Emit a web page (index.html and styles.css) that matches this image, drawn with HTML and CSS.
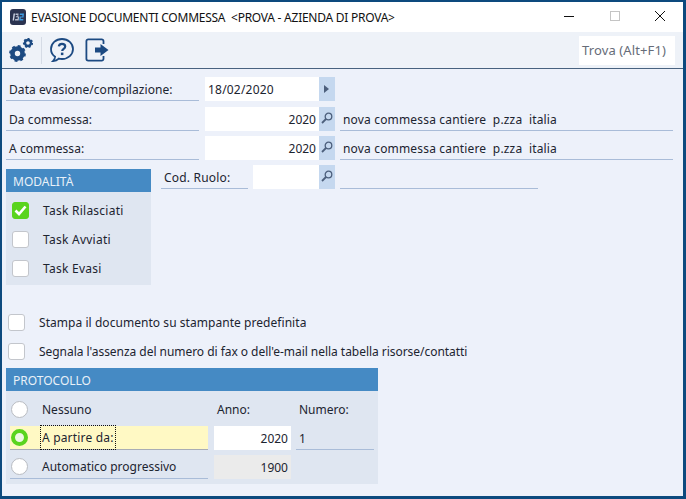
FILE: index.html
```html
<!DOCTYPE html>
<html lang="it">
<head>
<meta charset="utf-8">
<title>Evasione documenti commessa</title>
<link rel="stylesheet" href="styles.css">
</head>
<body>
<div class="window">
  <header class="titlebar">
    <svg class="logo" width="16" height="16" viewBox="0 0 16 16"><rect width="16" height="16" rx="3" fill="#2b3350"/><path d="M3.600 4.500h1.400l-1 7H2.600z" fill="#cfd6e6"/><path d="M5.600 4.500h3l-.4 3 .9 0-.4 4H5l.2-1.400h2.400l.2-1.800H5.800l.1-1h1.400l.2-1.400H5.500z" fill="#cfd6e6" opacity=".85"/><path d="M10 4.500h4l-.5 4h-2.700l-.1 1.600h2.700l-.2 1.400h-4l.4-4h2.700l.1-1.600h-2.700z" fill="#3d9ae0"/></svg>
    <span class="title">EVASIONE DOCUMENTI COMMESSA&nbsp; &lt;PROVA - AZIENDA DI PROVA&gt;</span>
    <div class="winctl">
      <svg width="12" height="12" viewBox="0 0 12 12"><path d="M1 6.500h10" stroke="#111" stroke-width="1"/></svg>
      <svg class="ctl-max" width="12" height="12" viewBox="0 0 12 12"><rect x=".5" y="1.500" width="9" height="9" fill="none" stroke="#c4c4c4"/></svg>
      <svg width="12" height="12" viewBox="0 0 12 12"><path d="M1 1l10 10M11 1L1 11" stroke="#111" stroke-width="1"/></svg>
    </div>
  </header>
  <nav class="toolbar">
    <svg class="tool" width="24" height="24" viewBox="0 0 24 24" fill="none" stroke="#1c4a82">
      <circle cx="8.500" cy="15.500" r="5" stroke-width="4.600"/>
      <circle cx="8.500" cy="15.500" r="7.400" stroke-width="2" stroke-dasharray="2.900 2.910"/>
      <circle cx="19" cy="5" r="3" stroke-width="2.400"/>
      <circle cx="19" cy="5" r="4.300" stroke-width="1.600" stroke-dasharray="1.930 1.930"/>
    </svg>
    <span class="sep"></span>
    <svg class="tool" width="24" height="24" viewBox="0 0 24 24" fill="none">
      <path d="M12 1C18.100 1 23 5.400 23 11S18.100 21 12 21c-1.100 0-2.200-.1-3.200-.4-1.500 1.500-3.400 2.300-5.800 2.500 1.200-1.200 2-2.600 2.100-4.300C2.600 17.100 1 14.300 1 11 1 5.400 5.900 1 12 1z" stroke="#1c4a82" stroke-width="1.800"/>
      <path d="M8.800 8.400c.3-1.600 1.500-2.500 3.200-2.500 1.900 0 3.200 1.100 3.200 2.600 0 2.300-3 2.400-3 4.500" stroke="#1c4a82" stroke-width="2.200"/>
      <rect x="10.900" y="14.600" width="2.500" height="2.500" fill="#1c4a82"/>
    </svg>
    <svg class="tool door" width="24" height="24" viewBox="0 0 24 24" fill="none">
      <path d="M18.500 6V3.200a1.800 1.800 0 0 0-1.800-1.800H3.200a1.800 1.800 0 0 0-1.800 1.800v17.600a1.800 1.800 0 0 0 1.800 1.800h13.500a1.800 1.800 0 0 0 1.800-1.800V18" stroke="#1c4a82" stroke-width="1.800"/>
      <path d="M10 9.500h5.500V6l8 6-8 6v-3.500H10z" fill="#1c4a82"/>
    </svg>
    <span class="search">Trova (Alt+F1)</span>
  </nav>
  <main class="form">
    <div class="row first">
      <span class="label">Data evasione/compilazione:</span>
      <span class="input date">18/02/2020</span>
      <span class="btn"><svg width="6" height="10" viewBox="0 0 6 10"><path d="M0 1l5 4-5 4z" fill="#4c5f7c"/></svg></span>
    </div>
    <div class="row">
      <span class="label">Da commessa:</span>
      <span class="input num">2020</span>
      <span class="btn"><svg class="lens" width="12" height="12" viewBox="0 0 12 12" fill="none"><circle cx="7.500" cy="4.500" r="3.300" stroke="#4c5f7c" stroke-width="1.300"/><path d="M5 7L1 11" stroke="#4c5f7c" stroke-width="1.800"/></svg></span>
      <span class="desc">nova commessa cantiere&nbsp; p.zza&nbsp; italia</span>
    </div>
    <div class="row">
      <span class="label">A commessa:</span>
      <span class="input num">2020</span>
      <span class="btn"><svg class="lens" width="12" height="12" viewBox="0 0 12 12" fill="none"><circle cx="7.500" cy="4.500" r="3.300" stroke="#4c5f7c" stroke-width="1.300"/><path d="M5 7L1 11" stroke="#4c5f7c" stroke-width="1.800"/></svg></span>
      <span class="desc">nova commessa cantiere&nbsp; p.zza&nbsp; italia</span>
    </div>
    <div class="middle">
      <section class="group modalita">
        <h2 class="group-head">MODALITÀ</h2>
        <div class="checks">
          <div class="check-row"><span class="box on"><svg width="13" height="11" viewBox="0 0 13 11" fill="none"><path d="M1.500 5.500l3.500 3.500 6.500-7.500" stroke="#fff" stroke-width="2.600"/></svg></span><span>Task Rilasciati</span></div>
          <div class="check-row"><span class="box"></span><span>Task Avviati</span></div>
          <div class="check-row"><span class="box"></span><span>Task Evasi</span></div>
        </div>
      </section>
      <div class="row ruolo">
        <span class="label short">Cod. Ruolo:</span>
        <span class="input small"></span>
        <span class="btn"><svg class="lens" width="12" height="12" viewBox="0 0 12 12" fill="none"><circle cx="7.500" cy="4.500" r="3.300" stroke="#4c5f7c" stroke-width="1.300"/><path d="M5 7L1 11" stroke="#4c5f7c" stroke-width="1.800"/></svg></span>
        <span class="desc narrow"></span>
      </div>
    </div>
    <div class="options">
      <div class="opt-row"><span class="box"></span><span class="print">Stampa il documento su stampante predefinita</span></div>
      <div class="opt-row"><span class="box"></span><span class="warn">Segnala l'assenza del numero di fax o dell'e-mail nella tabella risorse/contatti</span></div>
    </div>
    <section class="group protocollo">
      <h2 class="group-head">PROTOCOLLO</h2>
      <div class="proto-grid">
        <div class="radio-cell"><span class="radio"></span><span class="radio-text">Nessuno</span></div>
        <div class="head-cell">Anno:</div>
        <div class="head-cell">Numero:</div>
        <div class="radio-cell active"><span class="radio on"></span><span class="radio-text focus">A partire da:</span></div>
        <span class="input num">2020</span>
        <div class="numero">1</div>
        <div class="radio-cell ruled"><span class="radio"></span><span class="radio-text">Automatico progressivo</span></div>
        <span class="input num disabled">1900</span>
        <div></div>
      </div>
    </section>
  </main>
</div>
</body>
</html>
```
FILE: styles.css
```css
* { box-sizing: border-box; }
html, body { margin: 0; padding: 0; }
body {
  width: 686px;
  height: 499px;
  overflow: hidden;
  font-family: "Noto Sans", sans-serif;
  font-size: 12px;
  color: #1c2430;
}
.window {
  width: 686px;
  height: 499px;
  border: solid #0d4a7e;
  border-width: 2px 3px 3px 2px;
  background: #edf1fa;
}
.titlebar {
  height: 30px;
  background: #fff;
  display: flex;
  align-items: center;
  padding-left: 8px;
}
.logo { flex: none; }
.title {
  margin-left: 5px;
  letter-spacing: -0.25px;
  color: #111;
  white-space: pre;
}
.winctl {
  margin-left: auto;
  margin-bottom: 2px;
  display: flex;
  padding-right: 17px;
}
.ctl-max { margin: 0 32px 0 35px; }
.toolbar {
  height: 37px;
  background: #eef2f8;
  border-bottom: 1px solid #48627f;
  display: flex;
  align-items: center;
  padding-left: 7px;
}
.sep { width: 1px; height: 27px; background: #d5dbe5; margin: 0 8px; }
.tool { flex: none; }
.door { margin-left: 11px; }
.search {
  margin-left: auto;
  margin-right: 8px;
  width: 96px;
  height: 29px;
  background: #fff;
  color: #666c78;
  display: flex;
  align-items: center;
  padding-left: 3px;
  font-size: 13px;
  letter-spacing: .12px;
  white-space: nowrap;
}
.form { padding: 8px 0 0 4px; }
.row {
  display: flex;
  height: 24px;
  margin-bottom: 5px;
}
.row.first { margin-bottom: 6px; }
.label {
  width: 193px;
  height: 24px;
  padding: 4px 0 0 3px;
  border-bottom: 1px solid #a9bcd8;
  margin-right: 6px;
  letter-spacing: .07px;
}
.label.short { width: 87px; margin-right: 5px; letter-spacing: .2px; }
.input {
  background: #fff;
  height: 24px;
  width: 114px;
  padding: 4px 3px 0;
}
.input.date { letter-spacing: .2px; }
.input.num { text-align: right; }
.input.small { width: 66px; }
.input.disabled { background: #ebebeb; }
.btn {
  width: 16px;
  height: 24px;
  background: #c5d8ef;
  display: flex;
  align-items: center;
  justify-content: center;
}
.lens { margin-bottom: 2px; }
.desc {
  margin-left: 5px;
  width: 333px;
  height: 24px;
  padding: 4px 0 0 3px;
  border-bottom: 1px solid #a9bcd8;
  white-space: nowrap;
  letter-spacing: .17px;
}
.desc.narrow { width: 198px; }
.middle { display: flex; align-items: flex-start; }
.ruolo { margin-left: 10px; }
.group { background: #dfe6f1; }
.modalita { width: 145px; height: 116px; margin-top: 4px; }
.group-head {
  margin: 0;
  height: 23px;
  background: #458ac4;
  color: #e9f1f8;
  font-weight: normal;
  font-size: 12px;
  padding: 4px 0 0 7px;
}
.checks { padding: 10px 0 0 6px; }
.check-row {
  display: flex;
  align-items: center;
  height: 17px;
  margin-bottom: 12px;
  letter-spacing: .25px;
}
.box {
  flex: none;
  width: 17px;
  height: 17px;
  background: #fff;
  border: 1px solid #c3c6cc;
  border-radius: 3px;
  margin-right: 14px;
  display: flex;
  align-items: center;
  justify-content: center;
}
.box.on { background: #5ad41e; border-color: #5ad41e; }
.options { margin-top: 29px; padding-left: 2px; }
.opt-row {
  display: flex;
  align-items: center;
  height: 17px;
  margin-bottom: 12px;
}
.print { letter-spacing: .05px; }
.warn { letter-spacing: -.04px; }
.protocollo { width: 372px; height: 116px; margin-top: -4px; }
.proto-grid {
  display: grid;
  grid-template-columns: 198px 77px 77px;
  grid-auto-rows: 24px;
  column-gap: 6px;
  row-gap: 5px;
  padding: 6px 0 0 4px;
}
.proto-grid > :nth-child(3n) { margin-left: -1px; }
.proto-grid .input { width: auto; }
.radio-cell { display: flex; align-items: center; padding-left: 1px; }
.radio-cell.active { background: #fff9c4; border-bottom: 1px solid #a8adb5; }
.radio-cell.ruled { border-bottom: 1px solid #a9bcd8; }
.radio {
  flex: none;
  width: 17px;
  height: 17px;
  border-radius: 50%;
  background: #fff;
  border: 1px solid #b9bcc2;
  margin-right: 12px;
}
.radio.on { border: 4px solid #5ad41e; background: #eef8e4; }
.radio-text { border: 1px dotted transparent; padding: 3px 1px; white-space: nowrap; }
.radio-text.focus { border-color: #111; letter-spacing: .18px; }
.head-cell { padding: 4px 0 0 3px; }
.numero { padding: 4px 0 0 3px; border-bottom: 1px solid #a9bcd8; }
```
